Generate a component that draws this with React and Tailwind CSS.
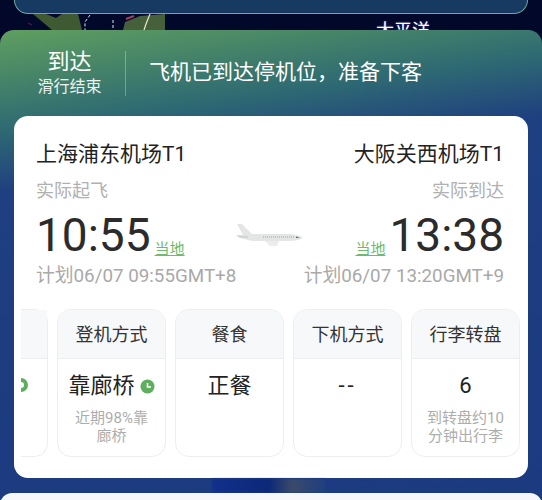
const font = "font-['Roboto','Noto_Sans_CJK_SC',sans-serif]";

const Plane = () => (
  <svg width="70" height="26" viewBox="0 0 70 26" className="blur-[0.6px]">
    <path d="M2 2 L7 2 L17 12 L56 12 Q65 13 68 16 Q64 19 52 19 L18 19 Q6 17 2 14 L8 13 Z" fill="#e4e5e5" />
    <path d="M1 13 L13 14 L13 16 L5 16 Z" fill="#d4d5d5" />
    <path d="M30 19 L44 19 L42 24 L35 24 Z" fill="#ececec" />
    <path d="M28 15 H60" stroke="#8a8f92" strokeWidth="0.8" strokeDasharray="1 1" />
    <path d="M61 14.5 L65 15.5 L61 16 Z" fill="#555b60" />
  </svg>
);

const Clock = () => (
  <svg width="15" height="15" viewBox="0 0 15 15">
    <circle cx="7.5" cy="7.5" r="7" fill="#5fae5f" />
    <path d="M7.5 4 V8 H11" stroke="#fff" strokeWidth="1.6" fill="none" />
  </svg>
);

const InfoCard = ({ title, value, sub, icon }) => (
  <div className="flex h-[148px] w-[109px] shrink-0 flex-col overflow-hidden rounded-[14px] border border-[#eceef0]">
    <div className="flex h-[49px] items-center justify-center border-b border-[#eceef0] bg-[#f7f8f9] text-[18px] text-[#333]">
      {title}
    </div>
    <div className="flex flex-1 flex-col items-center px-3 pt-[10px] text-center">
      <div className="flex h-[34px] items-center gap-[5px] text-[22px] leading-none whitespace-nowrap text-[#222]">
        {value}
        {icon}
      </div>
      {sub && <div className="mt-[6px] text-[15px] leading-[18px] text-[#adadad]">{sub}</div>}
    </div>
  </div>
);

export default function App() {
  return (
    <div className={`${font} relative h-[500px] w-[542px] overflow-hidden bg-[#02082a]`}>
      {/* top sheet */}
      <div className="mx-[14px] h-[14px] rounded-b-[14px] border border-t-0 border-[#6fa89a] bg-[#163a62]" />

      {/* map strip */}
      <svg width="542" height="16" viewBox="0 0 542 16" className="block">
        <path d="M33 0 L46 0 L56 4 L62 0 L78 0 L82 16 L52 16 Z" fill="#3f5a33" />
        <path d="M123 16 L125 8 L140 2 L165 0 L165 16 Z" fill="#45603a" />
        <path d="M150 0 L146 10 L144 16" stroke="#e8e8d0" strokeWidth="1.2" fill="none" />
        <path d="M90 1 L85 8 L85 16 M113 6 V16" stroke="#dfe0ee" strokeWidth="1" strokeDasharray="3 2" fill="none" />
        <path d="M126 5 L134 2" stroke="#a0405a" strokeWidth="2" />
        <path d="M28 9 L32 11" stroke="#5a2040" strokeWidth="1" />
      </svg>
      <div className="absolute top-[19px] left-[376px] text-[18px] leading-6 text-white [text-shadow:0_0_2px_#5a50d0]">太平洋</div>

      {/* status panel */}
      <div className="relative h-[470px] rounded-t-[14px] bg-[linear-gradient(172deg,#5f9f5f_0%,#2f6b72_18%,#1e3f80_30%,#1c3a80_100%)]">
        <div className="flex h-[86px] items-center pl-[37px] text-white">
          <div className="flex w-[65px] flex-col items-center">
            <span className="text-[22px] leading-[28px]">到达</span>
            <span className="text-[16px] leading-[22px] text-white/90">滑行结束</span>
          </div>
          <div className="mr-[23px] ml-[23px] h-[45px] w-px bg-white/30" />
          <div className="text-[21px]">飞机已到达停机位，准备下客</div>
        </div>

        {/* flight card */}
        <div className="mx-[14px] h-[362px] rounded-[14px] bg-white">
          <div className="pt-[22px] pr-[24px] pl-[22px]">
            <div className="flex justify-between text-[21px] leading-[32px] text-[#222]">
              <span>上海浦东机场T1</span>
              <span>大阪关西机场T1</span>
            </div>
            <div className="mt-[9px] flex justify-between text-[18px] leading-[24px] text-[#b0b0b0]">
              <span>实际起飞</span>
              <span>实际到达</span>
            </div>
            <div className="mt-[3px] flex h-[58px] items-center justify-between">
              <div className="flex w-[170px] items-end">
                <span className="text-[46px] leading-[58px] text-[#2b2b2b]">10:55</span>
                <span className="mb-[5px] ml-[4px] text-[15px] leading-[20px] text-[#6dbb6d] underline">当地</span>
              </div>
              <Plane />
              <div className="flex w-[170px] items-end justify-end">
                <span className="mb-[5px] mr-[4px] text-[15px] leading-[20px] text-[#6dbb6d] underline">当地</span>
                <span className="text-[46px] leading-[58px] text-[#2b2b2b]">13:38</span>
              </div>
            </div>
            <div className="flex justify-between text-[18.8px] leading-[24px] whitespace-nowrap text-[#a9a9a9]">
              <span>计划06/07 09:55GMT+8</span>
              <span>计划06/07 13:20GMT+9</span>
            </div>
          </div>

          {/* info cards, the row scrolls off to the left */}
          <div className="mt-[21px] ml-[7px] flex w-[499px] gap-[9px] overflow-hidden">
            <div className="relative flex h-[148px] w-[27px] shrink-0 flex-col rounded-r-[14px] border border-l-0 border-[#eceef0]">
              <div className="h-[49px] border-b border-[#eceef0] bg-[#f7f8f9]" />
              <div className="absolute top-[68px] -left-[7px] h-[14px] w-[14px] rounded-full bg-[#5fae5f]">
                <div className="absolute top-[4px] left-[4px] h-[6px] w-[6px] rounded-full bg-white" />
              </div>
            </div>
            <InfoCard title="登机方式" value="靠廊桥" sub="近期98%靠廊桥" icon={<Clock />} />
            <InfoCard title="餐食" value="正餐" />
            <InfoCard title="下机方式" value={<span className="tracking-[3px]">--</span>} />
            <InfoCard title="行李转盘" value="6" sub="到转盘约10分钟出行李" />
          </div>
        </div>

        {/* blurred map seen through the gap */}
        <div className="absolute top-[449px] left-[212px] h-[14px] w-[114px] bg-[linear-gradient(90deg,#12308c,#0c2878_50%,#3a4a6a_70%,#1f3f80)] blur-[1px]" />
      </div>

      {/* next card peeking in at the bottom */}
      <div className="absolute top-[493px] left-0 h-[20px] w-[542px] rounded-t-[12px] bg-[#f5f7fa]" />
    </div>
  );
}
